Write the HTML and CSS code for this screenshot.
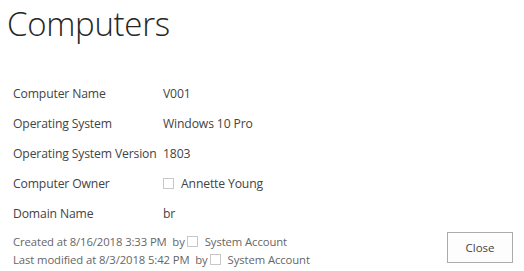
FILE: index.html
```html
<!DOCTYPE html>
<html lang="en">
<head>
    <meta charset="UTF-8">
    <title>Computers</title>
    <link rel="stylesheet" href="styles.css">
</head>
<body>
    <h1 class="page-title">Computers</h1>

    <table class="form-table">
        <tr>
            <td class="label">Computer Name</td>
            <td class="value">V001</td>
        </tr>
        <tr>
            <td class="label">Operating System</td>
            <td class="value">Windows 10 Pro</td>
        </tr>
        <tr>
            <td class="label">Operating System Version</td>
            <td class="value">1803</td>
        </tr>
        <tr>
            <td class="label">Computer Owner</td>
            <td class="value"><span class="presence"></span>Annette Young</td>
        </tr>
        <tr>
            <td class="label">Domain Name</td>
            <td class="value">br</td>
        </tr>
    </table>

    <div class="footer">
        <div class="meta">
            <div>Created at 8/16/2018 3:33 PM&nbsp; by<span class="presence small"></span>System Account</div>
            <div>Last modified at 8/3/2018 5:42 PM&nbsp; by<span class="presence small"></span>System Account</div>
        </div>
        <button class="close-button">Close</button>
    </div>
</body>
</html>
```

FILE: styles.css
```css
body {
    font-family: "Open Sans", "Noto Sans", sans-serif;
    margin: 0;
    padding: 0 11px 0 7px;
    background-color: #ffffff;
    color: #333;
}
.page-title {
    font-weight: 300;
    font-size: 33px;
    margin: 0;
    line-height: 48px;
    color: #262626;
    letter-spacing: -0.3px;
}
.form-table {
    border-collapse: collapse;
    margin-top: 30px;
    margin-left: 2px;
    font-size: 12.2px;
    letter-spacing: -0.15px;
    color: #444;
}
.form-table td {
    height: 30px;
    padding: 0 0 0 4px;
    vertical-align: middle;
    white-space: nowrap;
}
.form-table .label {
    width: 150px;
}
.form-table .value {
    padding-left: 0;
}
.presence {
    display: inline-block;
    width: 9px;
    height: 9px;
    border: 1px solid #c8c8c8;
    margin: 0 7px 0 0;
    vertical-align: -1px;
}
.presence.small {
    margin: 0 7px 0 2px;
}
.footer {
    display: flex;
    justify-content: space-between;
    align-items: flex-end;
    margin-top: 4px;
    margin-left: 6px;
}
.meta {
    font-size: 11.3px;
    letter-spacing: -0.1px;
    color: #666;
    line-height: 18px;
    margin-bottom: 2px;
}
.close-button {
    font-family: inherit;
    font-size: 11.5px;
    color: #444;
    background-color: #fdfdfd;
    border: 1px solid #ababab;
    width: 66px;
    height: 31px;
    margin-bottom: 8px;
}
```
